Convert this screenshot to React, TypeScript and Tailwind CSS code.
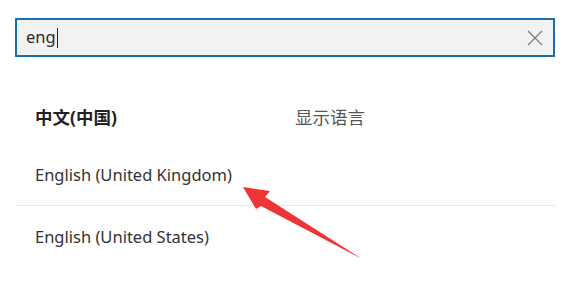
import React from "react";

export default function App() {
  const font = { fontFamily: '"Noto Sans", "Noto Sans CJK SC", sans-serif' };
  return (
    <div className="relative w-[565px] h-[291px] bg-white overflow-hidden" style={font}>
      <div className="pt-[18px] pl-[15px] pr-[10px]">
        <div className="flex items-center h-[39px] w-[540px] border-2 border-[#1b6ead] bg-[#f2f2f2] pl-[9px] pr-[10px]">
          <span className="text-[16.5px] text-[#2b2b2b] leading-none">eng</span>
          <span className="ml-[1px] w-[1px] h-[20px] bg-[#222]" />
          <div className="flex-1" />
          <svg width="16" height="16" viewBox="0 0 16 16" className="text-[#7a7a7a]">
            <path d="M1 1 L15 15 M15 1 L1 15" stroke="currentColor" strokeWidth="1.2" fill="none" />
          </svg>
        </div>
      </div>
      <div className="mt-[31px] pl-[16px] w-[555px]">
        <div className="flex items-center h-[58px] pl-[19px]">
          <span className="w-[260px] font-bold text-[17.5px] text-[#222]">中文(中国)</span>
          <span className="text-[17.5px] text-[#555]">显示语言</span>
        </div>
        <div className="flex items-center h-[60px] pl-[19px] border-b border-[#e9e9e9]">
          <span className="text-[16.5px] text-[#333]">English (United Kingdom)</span>
        </div>
        <div className="flex items-center h-[62px] pl-[19px]">
          <span className="text-[16.5px] text-[#333]">English (United States)</span>
        </div>
      </div>
      <svg className="absolute left-0 top-0" width="565" height="291" viewBox="0 0 565 291">
        <polygon points="243,187 270,191 265,197 362,259 261,206 256,209" fill="#ee3434" />
      </svg>
    </div>
  );
}
